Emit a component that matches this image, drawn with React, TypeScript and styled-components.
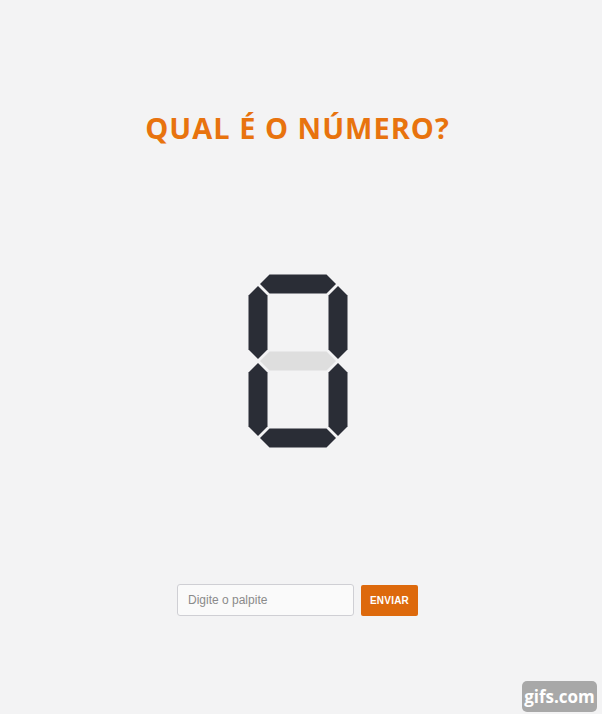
import React from "react";
import styled, { createGlobalStyle } from "styled-components";

const Global = createGlobalStyle`
  html, body { margin: 0; padding: 0; }
  body {
    background: #f3f3f4;
    font-family: "Liberation Sans", Arial, sans-serif;
    overflow: hidden;
  }
`;

const Page = styled.main`
  width: 595px;
  height: 714px;
  display: flex;
  flex-direction: column;
  align-items: center;
  box-sizing: border-box;
  padding-top: 108px;
`;

const Title = styled.h1`
  margin: 0;
  font-family: "Open Sans", "Liberation Sans", sans-serif;
  font-weight: 700;
  font-size: 29px;
  line-height: 40px;
  letter-spacing: 1px;
  color: #e8730e;
`;

const Display = styled.div`
  margin-top: 126px;
  width: 100px;
  height: 174px;
`;

const Form = styled.form`
  margin-top: 136px;
  display: flex;
  gap: 7px;
  align-items: center;
`;

const Input = styled.input`
  box-sizing: border-box;
  width: 177px;
  height: 32px;
  border: 1px solid #cfcfd4;
  border-radius: 3px;
  background: #fafafa;
  padding: 0 10px;
  font-family: "Liberation Sans", Arial, sans-serif;
  font-size: 12px;
  color: #333;
  outline: none;
  &::placeholder { color: #8a8a8a; }
`;

const Button = styled.button`
  box-sizing: border-box;
  width: 57px;
  height: 31px;
  border: none;
  border-radius: 2px;
  background: #dd690c;
  color: #fff;
  font-family: "Liberation Sans", Arial, sans-serif;
  font-weight: 700;
  font-size: 10px;
  letter-spacing: 0.2px;
  cursor: pointer;
`;

const Badge = styled.div`
  position: fixed;
  right: 5px;
  bottom: 2px;
  width: 75px;
  height: 31px;
  border-radius: 5px;
  background: #a8a8a8;
  color: #fff;
  display: flex;
  align-items: center;
  justify-content: center;
  font-family: "Open Sans", "Liberation Sans", sans-serif;
  font-weight: 700;
  font-size: 17px;
`;

const ON = "#2a2d36";
const OFF = "#dedede";

const hSeg = (cy: number) => {
  const x1 = 12, x2 = 88, h = 9.5;
  return `${x1},${cy} ${x1 + h},${cy - h} ${x2 - h},${cy - h} ${x2},${cy} ${x2 - h},${cy + h} ${x1 + h},${cy + h}`;
};
const vSeg = (cx: number, y1: number, y2: number) => {
  const h = 9.5;
  return `${cx},${y1} ${cx + h},${y1 + h} ${cx + h},${y2 - h} ${cx},${y2} ${cx - h},${y2 - h} ${cx - h},${y1 + h}`;
};

const Digit = () => (
  <svg width="100" height="174" viewBox="0 0 100 174">
    <polygon points={hSeg(10)} fill={ON} />
    <polygon points={hSeg(87)} fill={OFF} />
    <polygon points={hSeg(164)} fill={ON} />
    <polygon points={vSeg(10, 12, 85)} fill={ON} />
    <polygon points={vSeg(90, 12, 85)} fill={ON} />
    <polygon points={vSeg(10, 89, 162)} fill={ON} />
    <polygon points={vSeg(90, 89, 162)} fill={ON} />
  </svg>
);

export default function App() {
  return (
    <>
      <Global />
      <Page>
        <Title>QUAL É O NÚMERO?</Title>
        <Display>
          <Digit />
        </Display>
        <Form onSubmit={(e) => e.preventDefault()}>
          <Input placeholder="Digite o palpite" />
          <Button type="submit">ENVIAR</Button>
        </Form>
      </Page>
      <Badge>gifs.com</Badge>
    </>
  );
}
